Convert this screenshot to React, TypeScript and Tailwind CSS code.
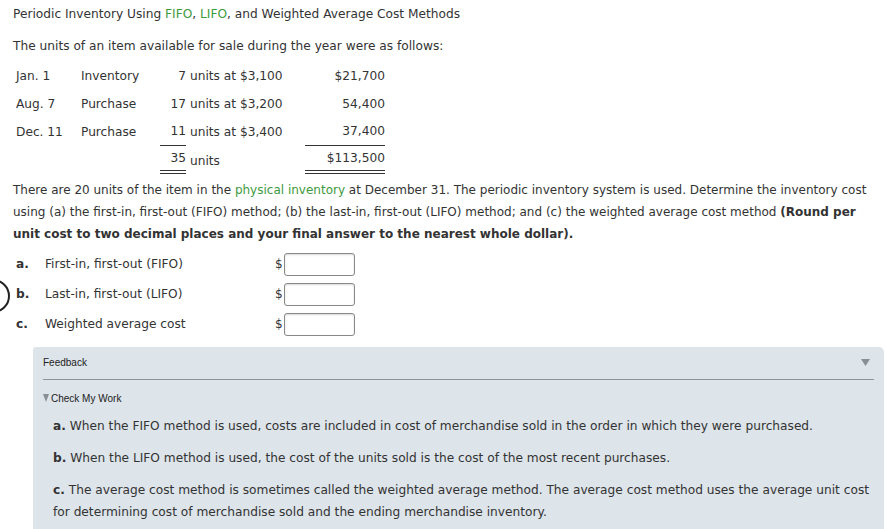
import React from 'react';

const rows = [
  { date: 'Jan. 1', desc: 'Inventory', qty: '7', rest: 'units at $3,100', amt: '$21,700' },
  { date: 'Aug. 7', desc: 'Purchase', qty: '17', rest: 'units at $3,200', amt: '54,400' },
  { date: 'Dec. 11', desc: 'Purchase', qty: '11', rest: 'units at $3,400', amt: '37,400' },
];

const answers = [
  { key: 'a.', label: 'First-in, first-out (FIFO)' },
  { key: 'b.', label: 'Last-in, first-out (LIFO)' },
  { key: 'c.', label: 'Weighted average cost' },
];

const App: React.FC = () => {
  return (
    <div className="relative w-[887px] h-[529px] overflow-hidden bg-white text-[12.2px] text-[#333] font-['DejaVu_Sans','Verdana',sans-serif]">
      {/* partial circle at left edge */}
      <div className="absolute left-[-26px] top-[279px] w-[36px] h-[34px] rounded-full border-[2px] border-[#222]" />

      <div className="pl-[13px] pt-[6px] leading-[16px]">
        Periodic Inventory Using <span className="text-[#3d9a3d]">FIFO</span>,{' '}
        <span className="text-[#3d9a3d]">LIFO</span>, and Weighted Average Cost Methods
      </div>
      <div className="pl-[13px] mt-[16px] leading-[16px]">
        The units of an item available for sale during the year were as follows:
      </div>

      <div className="mt-[8px] pl-[16px]">
        {rows.map((r, i) => (
          <div key={r.date} className="flex items-center h-[28px]">
            <div className="w-[65px]">{r.date}</div>
            <div className="w-[79px]">{r.desc}</div>
            <div className={`w-[26px] h-full flex items-center justify-end ${i === 2 ? 'border-b border-[#333]' : ''}`}>
              {r.qty}
            </div>
            <div className="w-[119px] pl-[4px]">{r.rest}</div>
            <div className={`w-[80px] h-full flex items-center justify-end ${i === 2 ? 'border-b border-[#333]' : ''}`}>
              {r.amt}
            </div>
          </div>
        ))}
        <div className="flex items-center h-[28px]">
          <div className="w-[144px]" />
          <div className="w-[26px] h-full flex items-center justify-end border-b-[4px] border-double border-[#333]">35</div>
          <div className="w-[119px] pl-[4px] pt-[2px]">units</div>
          <div className="w-[80px] h-full flex items-center justify-end border-b-[4px] border-double border-[#333]">$113,500</div>
        </div>
      </div>

      <p className="mt-[5px] pl-[13px] pr-[6px] leading-[22px] text-[12px]">
        There are 20 units of the item in the <span className="text-[#3d9a3d]">physical inventory</span> at December 31.
        The periodic inventory system is used. Determine the inventory cost using (a) the first-in, first-out (FIFO)
        method; (b) the last-in, first-out (LIFO) method; and (c) the weighted average cost method{' '}
        <b>(Round per unit cost to two decimal places and your final answer to the nearest whole dollar).</b>
      </p>

      <div className="mt-[4px] pl-[16px]">
        {answers.map((a) => (
          <div key={a.key} className="flex items-center h-[30px]">
            <div className="w-[29px] font-bold">{a.key}</div>
            <div className="w-[230px]">{a.label}</div>
            <div className="text-[12px] leading-none">$</div>
            <div className="ml-[1px] w-[71px] h-[23px] rounded-[3px] border border-[#888] shadow-[inset_0_1px_2px_rgba(0,0,0,0.15)] bg-white" />
          </div>
        ))}
      </div>

      <div className="ml-[33px] mr-[3px] mt-[8px] h-[200px] bg-[#dde4ea] rounded-tr-[5px] rounded-tl-[3px] px-[10px] pt-[9px]">
        <div className="flex items-center justify-between h-[13px] font-['Liberation_Sans',Arial,sans-serif] text-[10px] text-[#222]">
          <span>Feedback</span>
          <svg width="9" height="7" viewBox="0 0 9 7" className="mr-[4px]">
            <path d="M0 0 H9 L4.5 7 Z" fill="#8a8f93" />
          </svg>
        </div>
        <div className="mt-[10px] border-t border-[#8e9496]" />
        <div className="mt-[12px] flex items-center h-[12px] font-['Liberation_Sans',Arial,sans-serif] text-[10px] text-[#222]">
          <svg width="6" height="8" viewBox="0 0 6 8" className="mr-[2px]">
            <path d="M0 0 H6 L3 8 Z" fill="#8a8f93" />
          </svg>
          Check My Work
        </div>
        <div className="pl-[10px] pr-[2px] mt-[11px] text-[#333]">
          <p className="leading-[22px]">
            <b>a.</b> When the FIFO method is used, costs are included in cost of merchandise sold in the order in which they were purchased.
          </p>
          <p className="leading-[22px] mt-[10px]">
            <b>b.</b> When the LIFO method is used, the cost of the units sold is the cost of the most recent purchases.
          </p>
          <p className="leading-[22px] mt-[10px]">
            <b>c.</b> The average cost method is sometimes called the weighted average method. The average cost method uses the average unit cost for determining cost of merchandise sold and the ending merchandise inventory.
          </p>
        </div>
      </div>
    </div>
  );
};

export default App;
